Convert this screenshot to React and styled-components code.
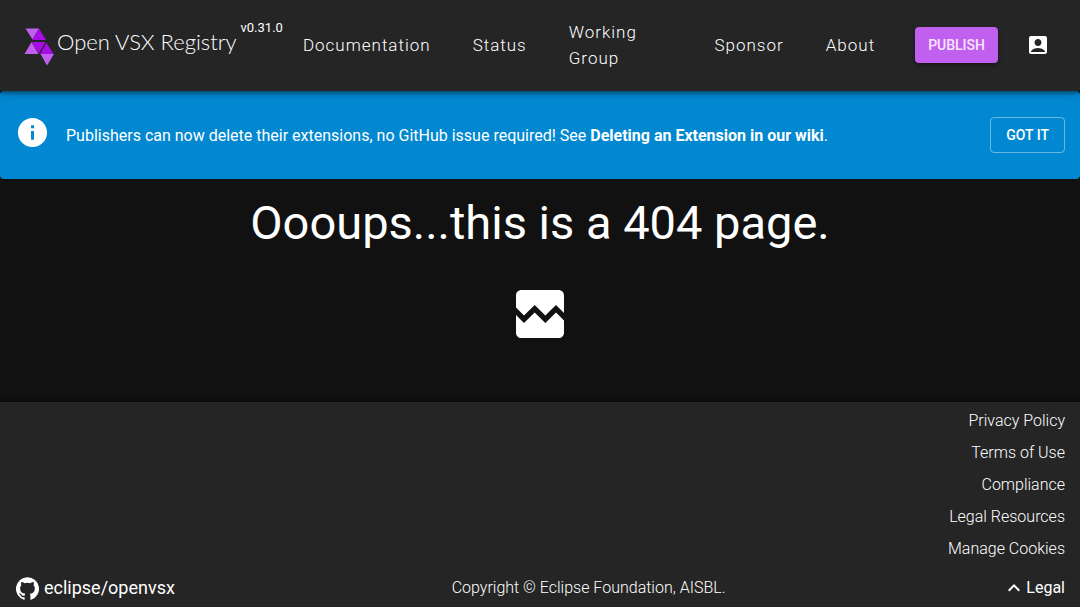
import React, { useState } from "react";
import styled, { createGlobalStyle } from "styled-components";
import {
  MdAccountBox,
  MdBrokenImage,
  MdExpandLess,
  MdInfo,
} from "react-icons/md";

const GlobalStyle = createGlobalStyle`
  * {
    box-sizing: border-box;
  }
  body {
    margin: 0;
    background: #111111;
    color: #ffffff;
    font-family: Roboto, "Liberation Sans", sans-serif;
    font-size: 16px;
  }
  a {
    color: inherit;
    text-decoration: none;
  }
  button {
    font-family: inherit;
    cursor: pointer;
  }
`;

const Page = styled.div`
  min-height: 100vh;
  display: flex;
  flex-direction: column;
`;

const Header = styled.header`
  position: relative;
  z-index: 1;
  display: flex;
  align-items: center;
  padding: 19px 24px 20px;
  background: #252525;
  box-shadow: 0 2px 4px rgba(0, 0, 0, 0.4), 0 1px 10px rgba(0, 0, 0, 0.2);
`;

const Brand = styled.div`
  display: flex;
  align-items: flex-start;
  flex-shrink: 0;
  gap: 4px;
  margin: -1px 20px 3px 0;
`;

const HomeLink = styled.a`
  display: flex;
  align-items: flex-start;
  gap: 3px;
  padding-top: 8px;
  font-family: Lato, "Liberation Sans", sans-serif;
  font-size: 22px;
  font-weight: 300;
  line-height: 28px;
  white-space: nowrap;
`;

const Version = styled.span`
  font-size: 13px;
  line-height: 16px;
`;

const Nav = styled.nav`
  flex: 1;
  min-width: 0;
  display: flex;
  align-items: center;
  gap: 42px;
`;

const NavLink = styled.a`
  flex-shrink: ${(props) => (props.$wrap ? 1 : 0)};
  white-space: ${(props) => (props.$wrap ? "normal" : "nowrap")};
  font-size: 17px;
  font-weight: 300;
  line-height: 26px;
  letter-spacing: 1px;
`;

const Actions = styled.div`
  display: flex;
  align-items: center;
  flex-shrink: 0;
  gap: 22px;
  margin-left: 40px;
`;

const PublishLink = styled.a`
  padding: 6px 13px;
  border-radius: 4px;
  background: #c160ef;
  color: #f8e6ff;
  font-size: 14px;
  font-weight: 500;
  line-height: 24px;
  box-shadow: 0 2px 4px rgba(0, 0, 0, 0.4);
`;

const IconButton = styled.button`
  display: flex;
  padding: 6px;
  border: 0;
  background: none;
  color: #ffffff;
  font-size: 24px;
`;

const Banner = styled.section`
  display: flex;
  align-items: center;
  gap: 16px;
  min-height: 88px;
  padding: 16px 15px;
  border-radius: 4px;
  background: #0288d1;

  > svg {
    flex-shrink: 0;
    margin-bottom: 6px;
    font-size: 35px;
  }
`;

const BannerText = styled.p`
  flex: 1;
  margin: 0;
  padding-top: 2px;
  line-height: 24px;
`;

const BannerButton = styled.button`
  padding: 5px 15px;
  border: 1px solid rgba(255, 255, 255, 0.4);
  border-radius: 4px;
  background: none;
  color: #ffffff;
  font-size: 14px;
  font-weight: 500;
  line-height: 24px;
`;

const Main = styled.main`
  flex: 1;
  display: flex;
  flex-direction: column;
  align-items: center;
  gap: 31px;
  padding: 16px 24px;

  svg {
    font-size: 64px;
  }
`;

const Title = styled.h1`
  margin: 0;
  font-size: 47px;
  font-weight: 400;
  line-height: 56px;
  text-align: center;
`;

const Footer = styled.footer`
  padding: 7px 15px 7px 16px;
  background: #252525;
  box-shadow: 0 -1px 4px rgba(0, 0, 0, 0.5);
`;

const LegalList = styled.ul`
  display: flex;
  flex-direction: column;
  align-items: flex-end;
  gap: 8px;
  margin: 0 0 15px;
  padding: 0;
  list-style: none;
  font-weight: 300;
  line-height: 24px;
`;

const FooterBar = styled.div`
  display: flex;
  align-items: center;
  justify-content: space-between;
  line-height: 24px;
`;

const RepoLink = styled.a`
  display: flex;
  align-items: center;
  gap: 5px;
  font-size: 18px;
`;

const Copyright = styled.span`
  font-weight: 300;
`;

const LegalToggle = styled.button`
  display: flex;
  align-items: center;
  padding: 0;
  border: 0;
  background: none;
  color: #ffffff;
  font-size: 16px;
  line-height: 24px;

  svg {
    font-size: 24px;
    transform: ${(props) => (props.$open ? "none" : "rotate(180deg)")};
  }
`;

const Logo = () => (
  <svg width="30" height="38" viewBox="0 0 30 38" aria-hidden="true">
    <path fill="#c160ef" d="M1.500 .5h13.500L8.500 11.500zM7.500 14L14.500 26H.5zM16.500 26H30l-7 11.500z" />
    <path fill="#a60ee5" d="M15 .5l7 11.500H8.500zM7.500 14H21.500L14.800 25.500zM22.500 14.800L29.500 26H16z" />
  </svg>
);

const GitHubMark = () => (
  <svg width="23" height="23" viewBox="0 0 24 24" fill="currentColor" aria-hidden="true">
    <path d="M12 .3a12 12 0 0 0-3.8 23.4c.6.1.8-.3.8-.6v-2c-3.3.7-4-1.6-4-1.6-.6-1.4-1.4-1.8-1.4-1.8-1-.7.1-.7.1-.7 1.2 0 1.9 1.2 1.9 1.2 1 1.8 2.8 1.3 3.5 1 0-.8.4-1.3.7-1.6-2.7-.3-5.5-1.3-5.5-6 0-1.2.5-2.3 1.3-3.1-.2-.4-.6-1.6 0-3.2 0 0 1-.3 3.4 1.2a11.5 11.5 0 0 1 6 0c2.3-1.5 3.3-1.2 3.3-1.2.6 1.6.2 2.8 0 3.2.9.8 1.3 1.9 1.3 3.2 0 4.600-2.800 5.600-5.500 5.900.5.400.9 1 .9 2.200v3.300c0 .3.1.7.8.6A12 12 0 0 0 12 .3" />
  </svg>
);

const legalLinks = [
  "Privacy Policy",
  "Terms of Use",
  "Compliance",
  "Legal Resources",
  "Manage Cookies",
];

const App = () => {
  const [showBanner, setShowBanner] = useState(true);
  const [showLegal, setShowLegal] = useState(true);

  return (
    <Page>
      <GlobalStyle />
      <Header>
        <Brand>
          <HomeLink href="#">
            <Logo />
            <span>Open VSX Registry</span>
          </HomeLink>
          <Version>v0.31.0</Version>
        </Brand>
        <Nav>
          <NavLink href="#">Documentation</NavLink>
          <NavLink href="#">Status</NavLink>
          <NavLink href="#" $wrap>
            Working Group
          </NavLink>
          <NavLink href="#">Sponsor</NavLink>
          <NavLink href="#">About</NavLink>
        </Nav>
        <Actions>
          <PublishLink href="#">PUBLISH</PublishLink>
          <IconButton aria-label="Log in">
            <MdAccountBox />
          </IconButton>
        </Actions>
      </Header>
      {showBanner && (
        <Banner>
          <MdInfo />
          <BannerText>
            Publishers can now delete their extensions, no GitHub issue
            required! See{" "}
            <a href="#">
              <b>Deleting an Extension in our wiki</b>
            </a>
            .
          </BannerText>
          <BannerButton onClick={() => setShowBanner(false)}>
            GOT IT
          </BannerButton>
        </Banner>
      )}
      <Main>
        <Title>Oooups...this is a 404 page.</Title>
        <MdBrokenImage />
      </Main>
      <Footer>
        {showLegal && (
          <LegalList>
            {legalLinks.map((label) => (
              <li key={label}>
                <a href="#">{label}</a>
              </li>
            ))}
          </LegalList>
        )}
        <FooterBar>
          <RepoLink href="#">
            <GitHubMark />
            eclipse/openvsx
          </RepoLink>
          <Copyright>Copyright © Eclipse Foundation, AISBL.</Copyright>
          <LegalToggle
            $open={showLegal}
            aria-expanded={showLegal}
            onClick={() => setShowLegal(!showLegal)}
          >
            <MdExpandLess />
            Legal
          </LegalToggle>
        </FooterBar>
      </Footer>
    </Page>
  );
};

export default App;
